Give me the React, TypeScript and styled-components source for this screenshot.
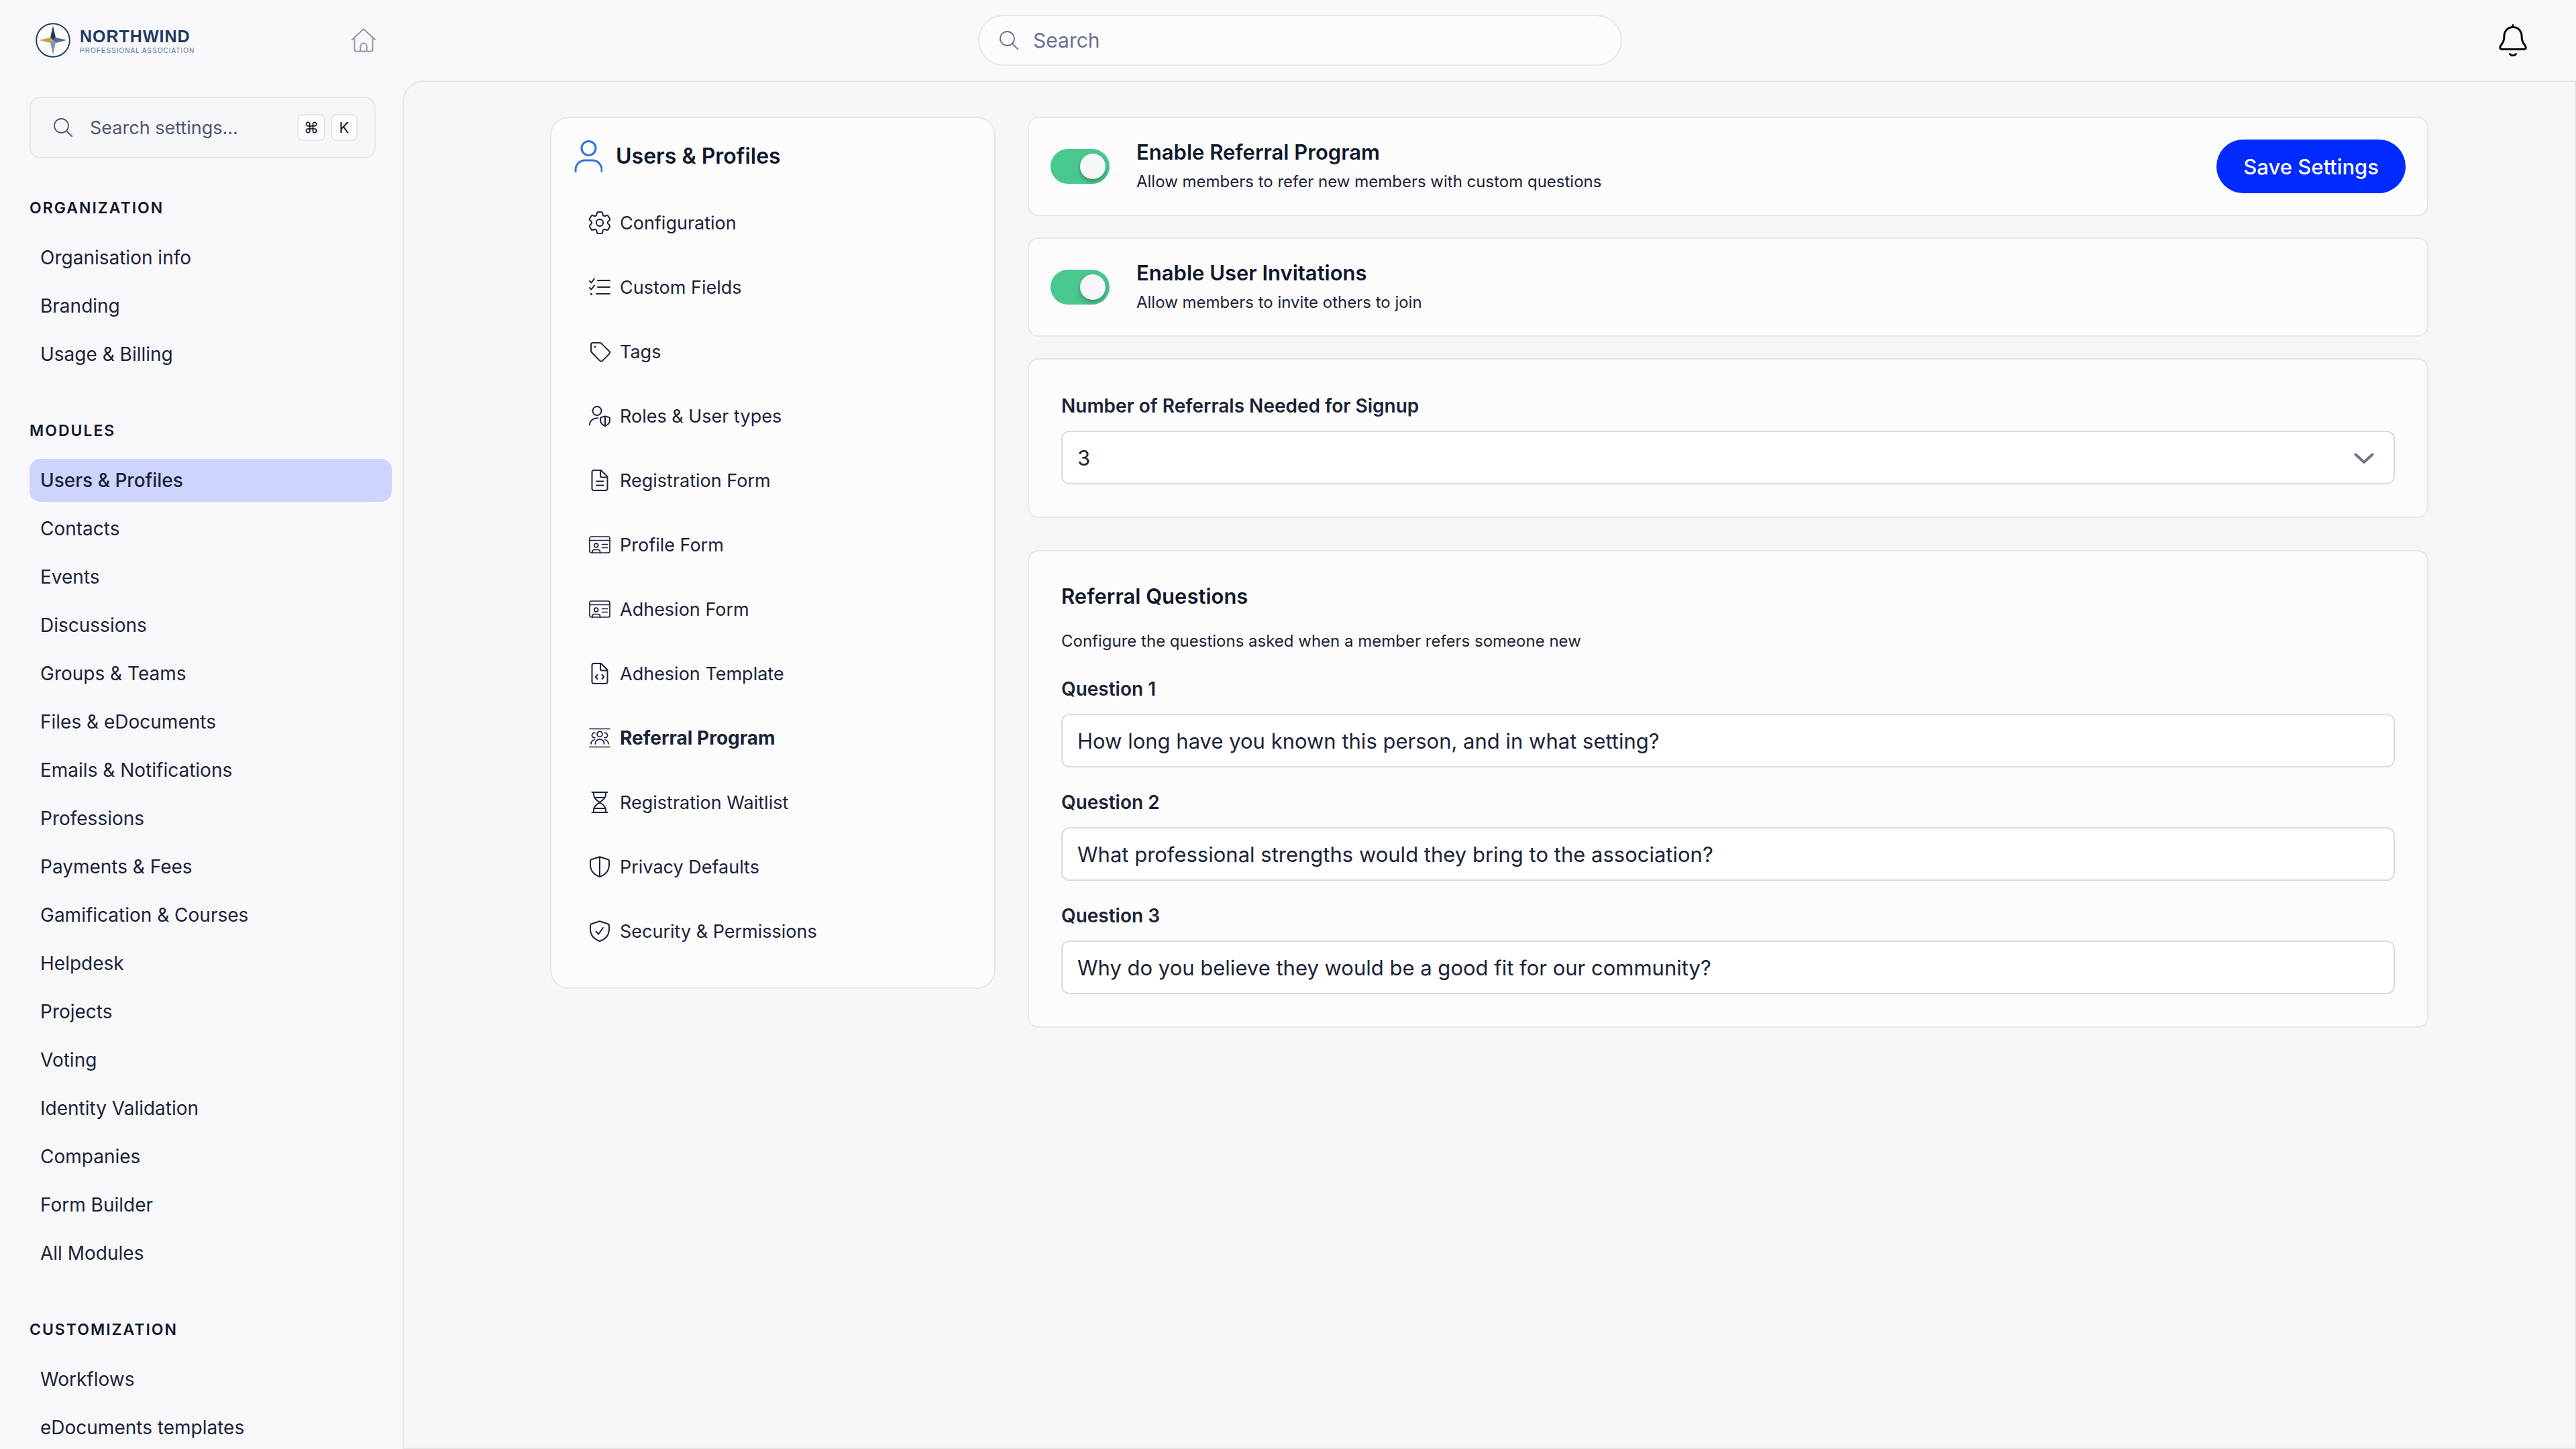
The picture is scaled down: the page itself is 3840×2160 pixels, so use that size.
import React, { useState } from "react";
import styled, { createGlobalStyle, css } from "styled-components";

const color = {
  page: "#f8f8fb",
  canvas: "#f5f6f8",
  surface: "#fcfcfd",
  white: "#ffffff",
  line: "#e5e7eb",
  field: "#d8dbe3",
  ink: "#0f172a",
  text: "#1a2337",
  muted: "#4f5769",
  slate: "#66738f",
  primary: "#002aff",
  active: "#ccd4ff",
  green: "#48c78e",
  accent: "#2f74e4",
  navy: "#1e3a5f",
};

const GlobalStyle = createGlobalStyle`
  *, *::before, *::after { box-sizing: border-box; }
  body {
    margin: 0;
    background: ${color.page};
    color: ${color.text};
    font-family: Inter, "Liberation Sans", sans-serif;
    font-size: 28px;
    -webkit-font-smoothing: antialiased;
  }
  button, input, select { font: inherit; color: inherit; margin: 0; }
  h1, h2, p, ul { margin: 0; padding: 0; }
  ul { list-style: none; }
  a { color: inherit; text-decoration: none; }
  svg { display: block; flex: none; }
`;

/* ---------- shell ---------- */

const Shell = styled.div`
  display: grid;
  grid-template-rows: 120px minmax(0, 1fr);
  height: 100vh;
`;

const Header = styled.header`
  display: grid;
  grid-template-columns: 560px minmax(0, 1fr) 524px;
  align-items: center;
`;

const BrandArea = styled.div`
  display: flex;
  align-items: center;
  justify-content: space-between;
  padding-left: 53px;
`;

const Brand = styled.a`
  display: flex;
  align-items: center;
  gap: 14px;
`;

const BrandText = styled.span`
  display: flex;
  flex-direction: column;
  gap: 4px;
  padding-top: 4px;
  font-family: "Liberation Sans", Arial, sans-serif;
`;

const BrandName = styled.span`
  font-size: 25px;
  line-height: 24px;
  font-weight: 700;
  letter-spacing: 1px;
  color: ${color.navy};
`;

const BrandTag = styled.span`
  font-size: 10px;
  line-height: 12px;
  letter-spacing: 1px;
  white-space: nowrap;
  color: #5c7696;
`;

const IconLink = styled.a`
  display: flex;
  color: #9299a8;
`;

const GlobalSearch = styled.label`
  display: flex;
  align-items: center;
  justify-self: center;
  gap: 22px;
  width: 960px;
  max-width: 100%;
  height: 76px;
  padding: 0 30px;
  border: 2px solid ${color.line};
  border-radius: 38px;
  background: ${color.surface};
  color: ${color.slate};
`;

const BareInput = styled.input`
  flex: 1;
  min-width: 0;
  padding: 0;
  border: 0;
  outline: 0;
  background: transparent;
  &::placeholder { color: inherit; opacity: 1; }
`;

const GlobalInput = styled(BareInput)`
  font-size: 30px;
`;

const HeaderActions = styled.div`
  display: flex;
  justify-content: flex-end;
  padding-right: 73px;
`;

const IconButton = styled.button`
  display: flex;
  padding: 0;
  border: 0;
  background: none;
  color: #05070d;
  cursor: pointer;
`;

const Body = styled.div`
  display: grid;
  grid-template-columns: 600px minmax(0, 1fr);
  min-height: 0;
`;

/* ---------- sidebar ---------- */

const Sidebar = styled.aside`
  padding: 24px 16px 0 44px;
  overflow-y: auto;
  scrollbar-width: none;
`;

const SettingsSearch = styled.label`
  display: flex;
  align-items: center;
  gap: 26px;
  height: 92px;
  margin: 0 24px 56px 0;
  padding: 0 25px 0 34px;
  border: 2px solid ${color.line};
  border-radius: 16px;
  background: ${color.canvas};
  color: ${color.muted};
  font-size: 27px;
`;

const Keys = styled.span`
  display: flex;
  gap: 8px;
`;

const Key = styled.kbd`
  display: grid;
  place-items: center;
  min-width: 40px;
  height: 40px;
  padding: 0 8px;
  border: 2px solid ${color.line};
  border-radius: 8px;
  background: ${color.surface};
  color: ${color.ink};
  font-family: inherit;
  font-size: 22px;
  line-height: 24px;
`;

const NavGroup = styled.nav`
  & + & {
    margin-top: 64px;
  }
`;

const NavHeading = styled.h2`
  margin-bottom: 24px;
  font-size: 23px;
  line-height: 36px;
  font-weight: 600;
  letter-spacing: 2px;
  text-transform: uppercase;
  color: ${color.ink};
`;

const NavList = styled.ul`
  display: grid;
  gap: 8px;
`;

const NavLink = styled.a<{ $active?: boolean }>`
  display: flex;
  align-items: center;
  height: 64px;
  padding: 0 16px;
  border-radius: 16px;
  ${(p) =>
    p.$active &&
    css`
      background: ${color.active};
      font-weight: 500;
    `}
`;

/* ---------- content ---------- */

const Main = styled.main`
  padding: 52px 48px;
  border: 2px solid ${color.line};
  border-top-left-radius: 32px;
  background: ${color.canvas};
  overflow-y: auto;
`;

const Columns = styled.div`
  display: grid;
  grid-template-columns: 664px minmax(0, 1fr);
  align-items: start;
  gap: 48px;
  max-width: 2800px;
  margin: 0 auto;
`;

const card = css`
  border: 2px solid ${color.line};
  background: ${color.surface};
`;

const SectionCard = styled.nav`
  ${card}
  padding: 24px 34px 36px;
  border-radius: 28px;
`;

const SectionHead = styled.div`
  display: flex;
  align-items: center;
  gap: 20px;
  height: 66px;
  margin-bottom: 18px;
  color: ${color.accent};
`;

const SectionTitle = styled.h1`
  font-size: 32px;
  line-height: 40px;
  font-weight: 600;
  color: ${color.ink};
`;

const SectionLink = styled.a<{ $active?: boolean }>`
  display: flex;
  align-items: center;
  gap: 14px;
  height: 96px;
  padding: 0 22px;
  font-size: ${(p) => (p.$active ? 28 : 27)}px;
  font-weight: ${(p) => (p.$active ? 700 : 400)};
`;

const Panels = styled.div`
  display: flex;
  flex-direction: column;
  gap: 32px;
`;

const ToggleCard = styled.section`
  ${card}
  display: flex;
  align-items: center;
  gap: 40px;
  height: 148px;
  padding: 0 32px;
  border-radius: 16px;
`;

const Switch = styled.input`
  appearance: none;
  flex: none;
  display: flex;
  align-items: center;
  width: 88px;
  height: 52px;
  padding: 0 6px;
  border-radius: 26px;
  background: #c9ced8;
  cursor: pointer;
  &::before {
    content: "";
    width: 38px;
    height: 38px;
    border-radius: 50%;
    background: ${color.canvas};
    box-shadow: 0 4px 6px rgba(0, 0, 0, 0.25);
  }
  &:checked {
    justify-content: flex-end;
    background: ${color.green};
  }
`;

const ToggleText = styled.div`
  display: flex;
  flex: 1;
  flex-direction: column;
  gap: 6px;
`;

const ToggleLabel = styled.label`
  font-size: 31px;
  line-height: 40px;
  font-weight: 600;
  color: ${color.ink};
`;

const Hint = styled.p`
  font-size: 24px;
  line-height: 36px;
`;

const SaveButton = styled.button`
  height: 80px;
  padding: 0 40px;
  border: 0;
  border-radius: 40px;
  background: ${color.primary};
  color: ${color.white};
  font-size: 31px;
  font-weight: 500;
  cursor: pointer;
`;

const FormCard = styled.section`
  ${card}
  padding: 48px;
  border-radius: 16px;
`;

const QuestionsCard = styled(FormCard)`
  margin-top: 16px;
`;

const CardTitle = styled.h2`
  margin-bottom: 30px;
  font-size: 31px;
  line-height: 38px;
  font-weight: 600;
  color: ${color.ink};
`;

const Questions = styled.div`
  display: grid;
  gap: 31px;
  margin-top: 32px;
`;

const Field = styled.div`
  display: grid;
  gap: 16px;
`;

const FieldLabel = styled.label`
  font-size: 28px;
  line-height: 42px;
  font-weight: 600;
`;

const control = css`
  width: 100%;
  height: 80px;
  padding: 0 22px;
  border: 2px solid ${color.field};
  border-radius: 12px;
  background: ${color.white};
  font-size: 31px;
`;

const TextInput = styled.input`
  ${control}
`;

const SelectWrap = styled.div`
  position: relative;
`;

const Select = styled.select`
  ${control}
  display: block;
  appearance: none;
`;

const SelectArrow = styled.svg`
  position: absolute;
  top: 32px;
  right: 30px;
  color: #68748e;
  pointer-events: none;
`;

/* ---------- drawings ---------- */

const Glyph = styled.svg.attrs({
  fill: "none",
  stroke: "currentColor",
  strokeLinecap: "round",
  strokeLinejoin: "round",
  "aria-hidden": true,
})``;

const SearchIcon = () => (
  <Glyph width="28" height="28" viewBox="0 0 28 28" strokeWidth="1.8">
    <circle cx="11.500" cy="11.500" r="10.500" />
    <path d="M19 19l8 8" />
  </Glyph>
);

const Compass = () => (
  <svg width="52" height="52" viewBox="-26 -26 52 52" aria-hidden="true">
    <circle r="24.800" fill="#ffffff" fillOpacity=".6" stroke={color.navy} strokeWidth="1.900" />
    <path d="M0-21.500L4-4 0 0-4-4Z" fill={color.navy} />
    <path d="M21-.3L4 4 0 0 4-4Z" fill="#566b8b" />
    <path d="M0 21.500L-4 4 0 0 4 4Z" fill="#8696ad" />
    <path d="M-21-.3L-4-4 0 0-4 4Z" fill="#c9a34a" />
  </svg>
);

const HomeIcon = () => (
  <Glyph width="36" height="36" viewBox="0 0 36 36" strokeWidth="2">
    <path d="M1 17L18 1.200 35 17M4.500 14.500V32a2.500 2.500 0 0 0 2.500 2.500h22a2.500 2.500 0 0 0 2.500-2.500V14.500M13.300 34.500V27a4.700 4.700 0 0 1 9.400 0v7.500" />
  </Glyph>
);

const BellIcon = () => (
  <Glyph width="42" height="48" viewBox="0 0 42 48" strokeWidth="3">
    <path d="M21 1.500V4M21 4.500C13.500 4.500 8 10 8 17.500c0 7-1.500 10-4.500 13.500-3 3.500-2 6.500 1 6.500h33c3 0 4-3 1-6.500-3-3.500-4.500-6.500-4.500-13.500 0-7.500-5.500-13-13-13Z" />
    <path d="M16.500 44.500c2 3 7 3 9 0" />
  </Glyph>
);

const PersonIcon = () => (
  <Glyph width="42" height="48" viewBox="0 0 42 48" strokeWidth="3">
    <circle cx="21.500" cy="12" r="10.500" />
    <path d="M2 46.500V44a14 14 0 0 1 14-14h11a14 14 0 0 1 14 14v2.500" />
  </Glyph>
);

const SHIELD =
  "M16 1.200l12.300 4.100c1 .3 1.700 1.100 1.700 2.200v5.500c0 8-5 14.700-14 18C7 27.700 2 21 2 13V7.500c0-1.100.7-1.900 1.700-2.200Z";
const SHEET = "M18 1H7a2.500 2.500 0 0 0-2.500 2.500v25A2.500 2.500 0 0 0 7 31h18a2.500 2.500 0 0 0 2.500-2.500V10.500ZM17 1v8a2.500 2.500 0 0 0 2.500 2.500h8";

const drawings: Record<string, React.ReactNode> = {
  cog: (
    <g transform="translate(-5.200 -5.200) scale(1.767)" strokeWidth="1.150">
      <path d="M9.594 3.94c.09-.542.56-.94 1.11-.94h2.593c.55 0 1.02.398 1.11.94l.213 1.281c.063.374.313.686.645.87.074.04.147.083.22.127.325.196.72.257 1.075.124l1.217-.456a1.125 1.125 0 0 1 1.37.49l1.296 2.247a1.125 1.125 0 0 1-.26 1.431l-1.003.827c-.293.241-.438.613-.43.992a7.723 7.723 0 0 1 0 .255c-.008.378.137.75.43.991l1.004.827c.424.35.534.955.26 1.43l-1.298 2.247a1.125 1.125 0 0 1-1.369.491l-1.217-.456c-.355-.133-.75-.072-1.076.124a6.47 6.47 0 0 1-.22.128c-.331.183-.581.495-.644.869l-.213 1.281c-.09.543-.56.94-1.11.94h-2.594c-.55 0-1.019-.398-1.11-.94l-.213-1.281c-.062-.374-.312-.686-.644-.87a6.52 6.52 0 0 1-.22-.127c-.325-.196-.72-.257-1.076-.124l-1.217.456a1.125 1.125 0 0 1-1.369-.49l-1.297-2.247a1.125 1.125 0 0 1 .26-1.431l1.004-.827c.292-.24.437-.613.43-.991a6.932 6.932 0 0 1 0-.255c.007-.38-.138-.751-.43-.992l-1.004-.827a1.125 1.125 0 0 1-.26-1.43l1.297-2.247a1.125 1.125 0 0 1 1.37-.491l1.216.456c.356.133.751.072 1.076-.124.072-.044.146-.086.22-.128.332-.183.582-.495.644-.869l.214-1.28Z" />
      <circle cx="12" cy="12" r="2.900" />
    </g>
  ),
  checklist: (
    <>
      <path d="M1 7l2.500 2.500L8 3.500M1 17l2.500 2.500L8 13.500M13 6h18M13 16h18M11 26h20" />
      <circle cx="3.500" cy="26.500" r=".7" />
    </>
  ),
  tag: (
    <>
      <path d="M5.500 3H16c.9 0 1.700.3 2.300.9l12 11.800a2.600 2.600 0 0 1 0 3.700L20 29.900a2.600 2.600 0 0 1-3.700 0L3.900 17.300A3 3 0 0 1 3 15.200V5.500A2.500 2.500 0 0 1 5.500 3Z" />
      <circle cx="9" cy="9" r=".6" />
    </>
  ),
  role: (
    <>
      <circle cx="12" cy="8.500" r="6.500" />
      <path d="M1 29.500c0-6.500 5-10.300 12-10.300" />
      <path d="M24 16.500l6 1.600c.6.200 1 .7 1 1.300v2.600c0 4-2.500 7.300-7 9.200-4.500-1.900-7-5.200-7-9.200v-2.600c0-.6.400-1.100 1-1.300ZM24 16.500v14.700" />
    </>
  ),
  document: <path d={SHEET + "M11 17.500h10.500M11 23.500h10.500"} />,
  idcard: (
    <g strokeWidth="1.700">
      <rect x="1" y="4" width="30" height="24" rx="2.500" />
      <path d="M1 9.500h30M19.500 15.500h8M19.500 20.500h8M5 28v-1.500a3 3 0 0 1 3-3h5.500a3 3 0 0 1 3 3V28" />
      <circle cx="10.700" cy="17" r="2.900" />
    </g>
  ),
  code: <path d={SHEET + "M12.500 18L9.800 21l2.700 3M19.500 18l2.700 3-2.700 3"} />,
  referral: (
    <g strokeWidth="1.700">
      <path d="M.9 2.500h30.200M.9 29.500h30.200" />
      <circle cx="16" cy="10.300" r="4" />
      <path d="M9.500 25c0-4.500 2.500-6.800 6.500-6.800s6.500 2.300 6.500 6.800M8.700 8.500a3.600 3.600 0 1 0 .3 7M23.300 8.500a3.600 3.600 0 1 1-.3 7M3 25c.2-3 2-5.500 5-6.300M29 25c-.2-3-2-5.500-5-6.300" />
    </g>
  ),
  hourglass: (
    <path d="M4.500 1h23M4.500 31h23M7 1v3.500c0 5 4 8 9 11.500 5-3.500 9-6.500 9-11.500V1M7 31v-3.500c0-5 4-8 9-11.500 5 3.500 9 6.500 9 11.500V31M8.500 9h15M7.500 25h17" />
  ),
  shield: <path d={SHIELD + "M16 1.200V31"} />,
  shieldcheck: <path d={SHIELD + "M10.500 16.500l3.700 4L21 11"} />,
};

const SectionIcon = ({ name }: { name: string }) => (
  <Glyph width="32" height="32" viewBox="0 0 32 32" strokeWidth="2" overflow="visible">
    {drawings[name]}
  </Glyph>
);

/* ---------- data ---------- */

const groups = [
  { title: "Organization", items: ["Organisation info", "Branding", "Usage & Billing"] },
  {
    title: "Modules",
    items: [
      "Users & Profiles",
      "Contacts",
      "Events",
      "Discussions",
      "Groups & Teams",
      "Files & eDocuments",
      "Emails & Notifications",
      "Professions",
      "Payments & Fees",
      "Gamification & Courses",
      "Helpdesk",
      "Projects",
      "Voting",
      "Identity Validation",
      "Companies",
      "Form Builder",
      "All Modules",
    ],
  },
  { title: "Customization", items: ["Workflows", "eDocuments templates"] },
];

const sections = [
  ["Configuration", "cog"],
  ["Custom Fields", "checklist"],
  ["Tags", "tag"],
  ["Roles & User types", "role"],
  ["Registration Form", "document"],
  ["Profile Form", "idcard"],
  ["Adhesion Form", "idcard"],
  ["Adhesion Template", "code"],
  ["Referral Program", "referral"],
  ["Registration Waitlist", "hourglass"],
  ["Privacy Defaults", "shield"],
  ["Security & Permissions", "shieldcheck"],
];

const initialQuestions = [
  "How long have you known this person, and in what setting?",
  "What professional strengths would they bring to the association?",
  "Why do you believe they would be a good fit for our community?",
];

type ToggleRowProps = { id: string; label: string; hint: string; children?: React.ReactNode };

const ToggleRow = ({ id, label, hint, children }: ToggleRowProps) => (
  <ToggleCard>
    <Switch type="checkbox" role="switch" id={id} defaultChecked />
    <ToggleText>
      <ToggleLabel htmlFor={id}>{label}</ToggleLabel>
      <Hint>{hint}</Hint>
    </ToggleText>
    {children}
  </ToggleCard>
);

export default function App() {
  const [count, setCount] = useState("3");
  const [questions, setQuestions] = useState(initialQuestions);

  return (
    <Shell>
      <GlobalStyle />
      <Header>
        <BrandArea>
          <Brand href="#">
            <Compass />
            <BrandText>
              <BrandName>NORTHWIND</BrandName>
              <BrandTag>PROFESSIONAL ASSOCIATION</BrandTag>
            </BrandText>
          </Brand>
          <IconLink href="#" aria-label="Home">
            <HomeIcon />
          </IconLink>
        </BrandArea>
        <GlobalSearch>
          <SearchIcon />
          <GlobalInput type="search" placeholder="Search" aria-label="Search" />
        </GlobalSearch>
        <HeaderActions>
          <IconButton type="button" aria-label="Notifications">
            <BellIcon />
          </IconButton>
        </HeaderActions>
      </Header>

      <Body>
        <Sidebar>
          <SettingsSearch>
            <SearchIcon />
            <BareInput type="text" placeholder="Search settings..." aria-label="Search settings" />
            <Keys>
              <Key>⌘</Key>
              <Key>K</Key>
            </Keys>
          </SettingsSearch>
          {groups.map((group) => (
            <NavGroup key={group.title} aria-label={group.title}>
              <NavHeading>{group.title}</NavHeading>
              <NavList>
                {group.items.map((item) => (
                  <li key={item}>
                    <NavLink href="#" $active={item === "Users & Profiles"}>
                      {item}
                    </NavLink>
                  </li>
                ))}
              </NavList>
            </NavGroup>
          ))}
        </Sidebar>

        <Main>
          <Columns>
            <SectionCard aria-label="Users & Profiles sections">
              <SectionHead>
                <PersonIcon />
                <SectionTitle>Users &amp; Profiles</SectionTitle>
              </SectionHead>
              <ul>
                {sections.map(([label, icon]) => (
                  <li key={label}>
                    <SectionLink href="#" $active={label === "Referral Program"}>
                      <SectionIcon name={icon} />
                      {label}
                    </SectionLink>
                  </li>
                ))}
              </ul>
            </SectionCard>

            <Panels>
              <ToggleRow
                id="referral-program"
                label="Enable Referral Program"
                hint="Allow members to refer new members with custom questions"
              >
                <SaveButton type="button">Save Settings</SaveButton>
              </ToggleRow>
              <ToggleRow
                id="user-invitations"
                label="Enable User Invitations"
                hint="Allow members to invite others to join"
              />
              <FormCard>
                <Field>
                  <FieldLabel htmlFor="referral-count">Number of Referrals Needed for Signup</FieldLabel>
                  <SelectWrap>
                    <Select id="referral-count" value={count} onChange={(e) => setCount(e.target.value)}>
                      {["1", "2", "3", "4", "5"].map((n) => (
                        <option key={n}>{n}</option>
                      ))}
                    </Select>
                    <SelectArrow width="32" height="20" viewBox="0 0 32 20" fill="none" aria-hidden="true">
                      <path d="M3.500 3.500L16 15 28.500 3.500" stroke="currentColor" strokeWidth="4" strokeLinecap="round" strokeLinejoin="round" />
                    </SelectArrow>
                  </SelectWrap>
                </Field>
              </FormCard>
              <QuestionsCard>
                <CardTitle>Referral Questions</CardTitle>
                <Hint>Configure the questions asked when a member refers someone new</Hint>
                <Questions>
                  {questions.map((value, i) => (
                    <Field key={i}>
                      <FieldLabel htmlFor={`question-${i + 1}`}>{`Question ${i + 1}`}</FieldLabel>
                      <TextInput
                        type="text"
                        id={`question-${i + 1}`}
                        value={value}
                        onChange={(e) =>
                          setQuestions(questions.map((q, j) => (j === i ? e.target.value : q)))
                        }
                      />
                    </Field>
                  ))}
                </Questions>
              </QuestionsCard>
            </Panels>
          </Columns>
        </Main>
      </Body>
    </Shell>
  );
}
